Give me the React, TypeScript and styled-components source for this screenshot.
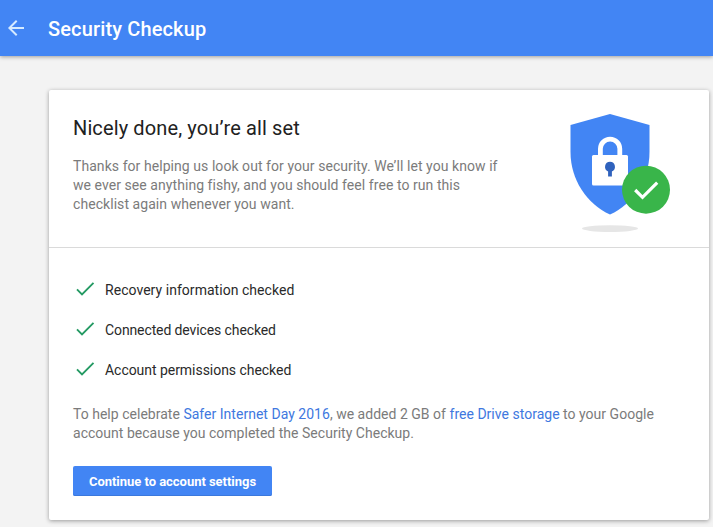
import React from "react";
import styled, { createGlobalStyle } from "styled-components";

const Global = createGlobalStyle`
  * { box-sizing: border-box; }
  body { margin: 0; background: #f3f3f3; font-family: Roboto, sans-serif; overflow: hidden; }
  h1, h2, p, ul { margin: 0; padding: 0; font-weight: 400; }
`;
const Page = styled.div`
  height: 527px;
  background: #f3f3f3;
`;
const Header = styled.header`
  height: 56px;
  display: flex;
  align-items: center;
  padding: 2px 0 0 8px;
  background: #4285f4;
  color: #fff;
  box-shadow: 0 1px 4px rgba(0, 0, 0, 0.35);
`;
const BackIcon = styled.svg`
  width: 16px;
  height: 16px;
  display: block;
  margin-bottom: 2px;
`;
const Title = styled.h1`
  && { font-size: 20px; font-weight: 500; }
  line-height: 24px;
  margin-left: 24px;
  letter-spacing: 0.14px;
`;
const Card = styled.main`
  width: 660px;
  height: 430px;
  margin: 34px 0 0 49px;
  background: #fff;
  border-radius: 2px;
  box-shadow: 0 1px 4px rgba(0, 0, 0, 0.37);
`;
const Intro = styled.section`
  height: 158px;
  border-bottom: 1px solid #dadada;
  padding: 24px 39px 0 24px;
  display: flex;
  justify-content: space-between;
`;
const Heading = styled.h2`
  font-size: 20px;
  line-height: 28px;
  letter-spacing: 0.12px;
  color: #212121;
`;
const Text = styled.p<{ $tracking: number }>`
  font-size: 14px;
  line-height: 19px;
  letter-spacing: ${(p) => p.$tracking}px;
  color: #7b7b7b;
  white-space: nowrap;
`;
const IntroText = styled(Text)`
  margin-top: 15px;
`;
const Shield = styled.svg`
  width: 101px;
  height: 119px;
  flex: none;
  display: block;
`;
const Body = styled.section`
  padding: 22px 24px 0;
`;
const Checks = styled.ul`
  list-style: none;
`;
const CheckRow = styled.li<{ $tracking: number }>`
  height: 40px;
  display: flex;
  align-items: center;
  font-size: 14px;
  letter-spacing: ${(p) => p.$tracking}px;
  color: #2a2a2a;
`;
const CheckIcon = styled.svg`
  width: 24px;
  height: 24px;
  margin: 0 8px 2px 0;
`;
const Offer = styled(Text)`
  margin-top: 15px;
`;
const Link = styled.a`
  color: #4078e0;
`;
const Button = styled.button`
  display: block;
  width: 199px;
  height: 30px;
  margin-top: 23px;
  padding: 1px 0 0;
  border: 0;
  border-radius: 2px;
  background: #4285f4;
  box-shadow: inset 0 -1px #3b78dc;
  color: #fff;
  font: 700 13px Roboto, sans-serif;
  letter-spacing: -0.03px;
`;

const checks = [
  { label: "Recovery information checked", tracking: 0.04 },
  { label: "Connected devices checked", tracking: -0.11 },
  { label: "Account permissions checked", tracking: -0.04 },
];

export default function App() {
  return (
    <Page>
      <Global />
      <Header>
        <BackIcon viewBox="4 4 16 16">
          <path fill="#d5eaff" d="M20 11H7.83l5.59-5.59L12 4l-8 8 8 8 1.41-1.41L7.83 13H20z" />
        </BackIcon>
        <Title>Security Checkup</Title>
      </Header>
      <Card>
        <Intro>
          <div>
            <Heading>Nicely done, you’re all set</Heading>
            <IntroText $tracking={0.06}>
              Thanks for helping us look out for your security. We’ll let you know if<br />
              we ever see anything fishy, and you should feel free to run this<br />
              checklist again whenever you want.
            </IntroText>
          </div>
          <Shield viewBox="0 0 101 119">
            <ellipse cx="41" cy="114.600" rx="28" ry="3.300" fill="#e6e6e6" />
            <path fill="#4285f4" d="M41 0 80.500 11V38C80.500 66 64 90 41 100.500C18 90 1.500 66 1.500 38V11Z" />
            <path fill="none" stroke="#fff" strokeWidth="4.800" d="M31.400 42V34.800a9.700 9.700 0 0 1 19.400 0V42" />
            <rect x="23" y="41" width="36" height="30.500" rx="1.500" fill="#fff" />
            <path fill="#2f62bd" d="M41 47.800a5 5 0 0 1 1.900 9.600v5h-3.800v-5A5 5 0 0 1 41 47.800Z" />
            <circle cx="77" cy="75.700" r="24" fill="#39b54a" />
            <path fill="none" stroke="#fff" strokeWidth="3.200" d="m66.200 76 7.300 7.300 14.700-14.700" />
          </Shield>
        </Intro>
        <Body>
          <Checks>
            {checks.map((c) => (
              <CheckRow key={c.label} $tracking={c.tracking}>
                <CheckIcon viewBox="0 0 24 24">
                  <path fill="none" stroke="#249a63" strokeWidth="1.900" d="m4 12.300 5 5L20.500 5.800" />
                </CheckIcon>
                {c.label}
              </CheckRow>
            ))}
          </Checks>
          <Offer $tracking={0.02}>
            To help celebrate <Link>Safer Internet Day 2016</Link>, we added 2 GB of <Link>free Drive storage</Link> to your Google<br />
            account because you completed the Security Checkup.
          </Offer>
          <Button>Continue to account settings</Button>
        </Body>
      </Card>
    </Page>
  );
}
